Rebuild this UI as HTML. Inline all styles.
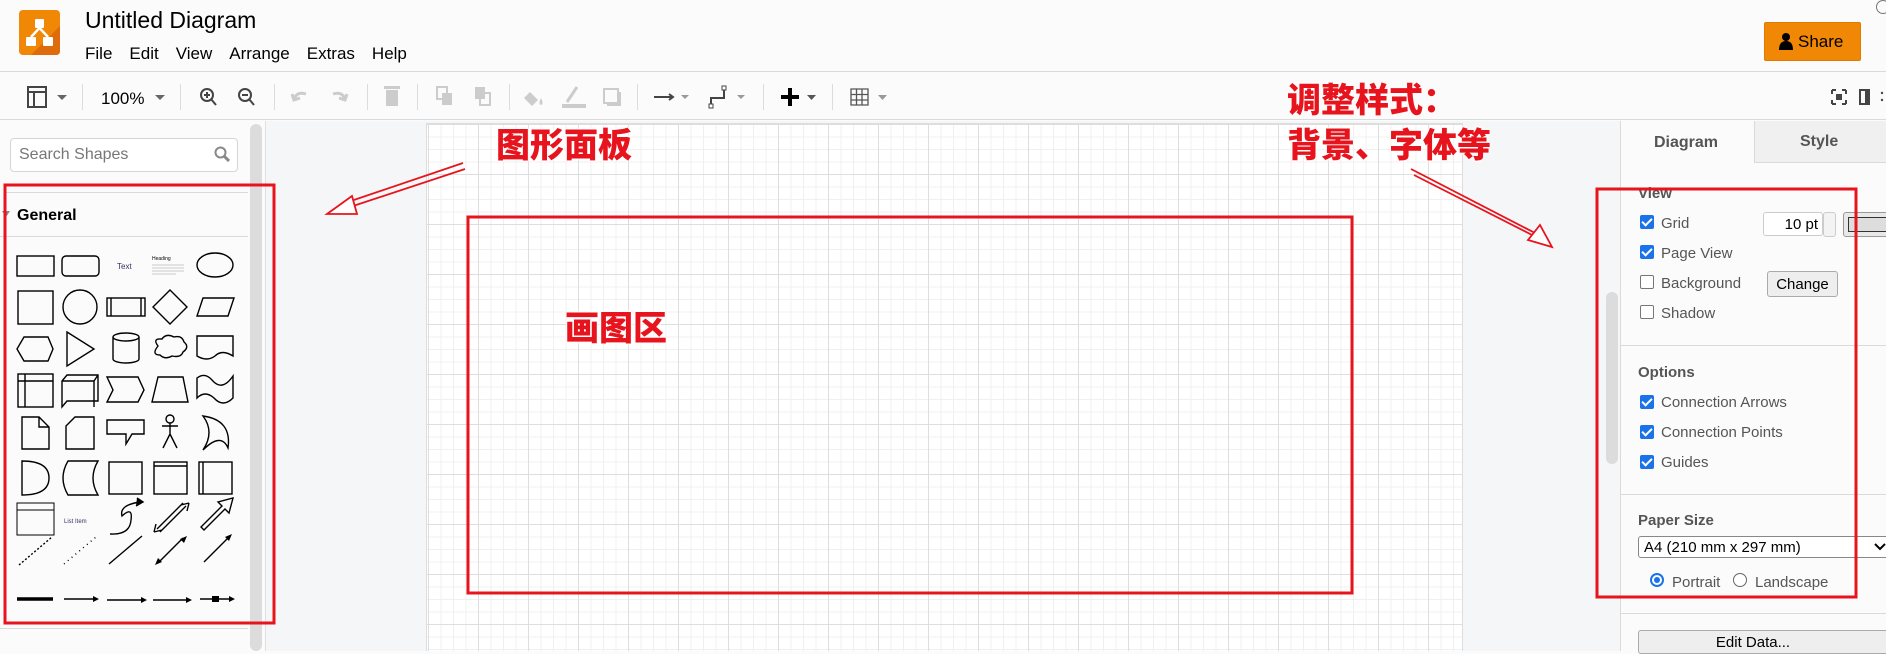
<!DOCTYPE html>
<html><head><meta charset="utf-8"><style>
*{margin:0;padding:0;box-sizing:border-box}
body{width:1886px;height:651px;overflow:hidden;position:relative;background:#fbfbfb;font-family:"Liberation Sans","Noto Sans CJK SC",sans-serif;color:#000}
.a{position:absolute}
.hdr{left:0;top:0;width:1886px;height:72px;background:#fbfbfb;border-bottom:1px solid #dadada}
.tb{left:0;top:72px;width:1886px;height:48px;background:#fbfbfb;border-bottom:1px solid #dadada}
.sep{position:absolute;top:84px;width:1px;height:26px;background:#dcdcdc}
.menu span{margin-right:17px}
.canvas{left:265px;top:121px;width:1355px;height:530px;background:#f5f6f8;border-left:1px solid #e0e0e0}
.page{left:426px;top:123px;width:1037px;height:528px;background-color:#fff;
background-image:linear-gradient(#dedede 1px,transparent 1px),linear-gradient(90deg,#dedede 1px,transparent 1px),linear-gradient(#f0f0f0 1px,transparent 1px),linear-gradient(90deg,#f0f0f0 1px,transparent 1px);
background-size:50px 50px,50px 50px,12.5px 12.5px,12.5px 12.5px;background-position:1px 0px;border-left:1px solid #ddd;border-right:1px solid #ddd;border-top:1px solid #ddd}
.rp{left:1620px;top:121px;width:266px;height:530px;background:#fbfbfb;border-left:1px solid #dadada}
.lbl{font-size:15px;color:#555}
.cb{position:absolute;left:1640px;width:14px;height:14px;border-radius:2px;background:#1a73e8}
.cb::after{content:"";position:absolute;left:4px;top:1px;width:4px;height:8px;border:solid #fff;border-width:0 2px 2px 0;transform:rotate(45deg)}
.ucb{position:absolute;left:1640px;width:14px;height:14px;border-radius:2px;border:1px solid #767676;background:#fff}
.hd{font-size:15px;font-weight:bold;color:#555}
.hl{position:absolute;height:1px;background:#dadada}
.ann{font-weight:900;color:#e8141d;font-size:34px;text-shadow:0 0 2px #fff,0 0 2px #fff,0 0 3px #fff,0 0 4px #fff;font-family:"Noto Sans CJK SC","WenQuanYi Zen Hei",sans-serif;line-height:1}
.ti{fill:none;stroke:#444;stroke-width:2}
</style></head><body>

<div class="a hdr"></div>
<svg class="a" style="left:19px;top:10px" width="41" height="45" viewBox="0 0 41 45">
<rect x="0" y="0" width="41" height="45" rx="4" fill="#f08705"/>
<path d="M12 45 L41 16 L41 41 Q41 45 37 45Z" fill="#df6c0c"/>
<rect x="16" y="9" width="9" height="9" rx="1" fill="#fff"/>
<rect x="7" y="27" width="10" height="9" rx="1" fill="#fff"/>
<rect x="24" y="27" width="10" height="9" rx="1" fill="#fff"/>
<path d="M20.5 18 L12 27 M20.5 18 L29 27" stroke="#fff" stroke-width="2.5"/>
</svg>
<div class="a" style="left:85px;top:7px;font-size:23px">Untitled Diagram</div>
<div class="a menu" style="left:85px;top:44px;font-size:17px"><span>File</span><span>Edit</span><span>View</span><span>Arrange</span><span>Extras</span><span>Help</span></div>
<div class="a" style="left:1764px;top:22px;width:97px;height:39px;background:#f08705;border-radius:2px;border:1px solid #e07a00"></div>
<svg class="a" style="left:1778px;top:32px" width="16" height="18"><circle cx="8" cy="5" r="4" fill="#000"/><path d="M1 18 Q1 9 8 9 Q15 9 15 18Z" fill="#000"/></svg>
<div class="a" style="left:1798px;top:32px;font-size:17px">Share</div>
<div class="a" style="left:1876px;top:0px;width:14px;height:14px;border:1px solid #777;border-radius:50%"></div>

<div class="a tb"></div>
<svg class="a" style="left:0;top:72px" width="1886" height="48">
<g transform="translate(0,-72)">
<rect x="28" y="87" width="18" height="20" class="ti" stroke-width="1.6"/><path d="M28 92 H46 M34 92 V107" class="ti" stroke-width="1.6"/>
<path d="M57 95 L67 95 L62 100Z" fill="#666"/>
<path d="M155 95 L165 95 L160 100Z" fill="#666"/>
<circle cx="207" cy="95" r="6" class="ti"/><path d="M211 99 L216 105 M204 95 H210 M207 92 V98" class="ti"/>
<circle cx="245" cy="95" r="6" class="ti"/><path d="M249 99 L254 105 M242 95 H248" class="ti"/>
<path d="M294 100 Q296 91 306 94 M292 94 L294 100 L300 98" fill="none" stroke="#ccc" stroke-width="3"/>
<path d="M345 100 Q343 91 333 94 M347 94 L345 100 L339 98" fill="none" stroke="#ccc" stroke-width="3"/>
<rect x="386" y="90" width="12" height="16" fill="#ccc"/><rect x="384" y="86" width="16" height="3" fill="#ccc"/>
<rect x="437" y="87" width="10" height="12" fill="none" stroke="#ccc" stroke-width="2"/><rect x="442" y="93" width="10" height="12" fill="#ccc"/>
<rect x="475" y="87" width="10" height="12" fill="#ccc"/><rect x="480" y="93" width="10" height="12" fill="none" stroke="#ccc" stroke-width="2"/>
<path d="M530 92 L538 100 L532 106 L524 98Z" fill="#ccc"/><path d="M541 98 Q544 104 541 105 Q538 104 541 98" fill="#ccc"/>
<path d="M567 102 L577 87" stroke="#ccc" stroke-width="3"/><rect x="562" y="104" width="24" height="4" fill="#ccc"/>
<rect x="604" y="89" width="14" height="14" fill="none" stroke="#ccc" stroke-width="2"/><path d="M607 105 H620 V92" stroke="#ccc" stroke-width="2" fill="none"/>
<path d="M654 97 H673 M669 94 L673 97 L669 100" class="ti" stroke-width="1.5"/><path d="M681 95 L689 95 L685 99Z" fill="#999"/>
<path d="M711 106 V98 H724 V89" class="ti" stroke-width="1.5"/><rect x="722" y="86" width="4" height="4" fill="#fff" stroke="#444"/><rect x="709" y="104" width="4" height="4" fill="#fff" stroke="#444"/><path d="M737 95 L745 95 L741 99Z" fill="#999"/>
<path d="M781 97 H799 M790 88 V106" stroke="#000" stroke-width="4"/><path d="M807 95 L816 95 L811.5 100Z" fill="#555"/>
<path d="M851 89 H868 V105 H851Z M851 94.5 H868 M851 100 H868 M856.5 89 V105 M862 89 V105" fill="none" stroke="#555" stroke-width="1.3"/><path d="M878 95 L887 95 L882.5 100Z" fill="#999"/>
<path d="M1832 90 v4 M1832 90 h4 M1846 90 v4 M1846 90 h-4 M1832 104 v-4 M1832 104 h4 M1846 104 v-4 M1846 104 h-4" stroke="#444" stroke-width="2"/><rect x="1836" y="94" width="6" height="6" fill="#444"/>
<rect x="1860" y="90" width="9" height="14" fill="none" stroke="#444" stroke-width="2"/><rect x="1865" y="90" width="4" height="14" fill="#444"/>
<circle cx="1882" cy="93" r="1.2" fill="#444"/><circle cx="1882" cy="100" r="1.2" fill="#444"/>
</g></svg>
<div class="a" style="left:101px;top:89px;font-size:17px">100%</div>
<div class="sep" style="left:82px"></div><div class="sep" style="left:180px"></div><div class="sep" style="left:274px"></div><div class="sep" style="left:367px"></div><div class="sep" style="left:417px"></div><div class="sep" style="left:509px"></div><div class="sep" style="left:637px"></div><div class="sep" style="left:763px"></div><div class="sep" style="left:832px"></div>

<div class="a" style="left:0;top:121px;width:265px;height:530px;background:#fbfbfb"></div>
<div class="a" style="left:250px;top:124px;width:12px;height:527px;background:#dcdcdc;border-radius:6px"></div>
<div class="a" style="left:10px;top:138px;width:228px;height:34px;border:1px solid #d5d5d5;border-radius:4px;background:#fff"></div>
<div class="a" style="left:19px;top:146px;font-size:16px;color:#777">Search Shapes</div>
<svg class="a" style="left:214px;top:146px" width="16" height="16"><circle cx="6.5" cy="6.5" r="5" fill="none" stroke="#888" stroke-width="2"/><path d="M10 10 L15 15" stroke="#888" stroke-width="3"/></svg>
<div class="hl" style="left:4px;top:192px;width:244px"></div>
<div class="hl" style="left:0;top:236px;width:248px"></div>
<div class="hl" style="left:0;top:628px;width:248px"></div>
<svg class="a" style="left:2px;top:210px" width="8" height="8"><path d="M0 1 L8 1 L4 7Z" fill="#888"/></svg>
<div class="a" style="left:17px;top:207px;font-size:16px;font-weight:bold">General</div>

<svg class="a" style="left:0;top:0" width="265" height="651">
<g fill="none" stroke="#000" stroke-width="1.4">
<rect x="17" y="256" width="37" height="20"/><rect x="62" y="256" width="37" height="20" rx="4"/>
<ellipse cx="215" cy="265" rx="18" ry="12"/>
<rect x="18" y="291" width="35" height="33"/><circle cx="80" cy="307" r="17"/>
<rect x="107" y="298" width="38" height="18"/><path d="M111 298V316M141 298V316"/>
<path d="M170 290 L187 307 L170 324 L153 307Z"/><path d="M203 298 H234 L228 316 H197Z"/>
<path d="M24 337 H48 L53 349 L48 361 H24 L17 349Z"/><path d="M67 332 L94 349 L67 366Z"/>
<path d="M113 337 V359 A13 4 0 0 0 139 359 V337 A13 4 0 0 0 113 337 A13 4 0 0 0 139 337"/>
<path d="M158 346 Q152 338 162 339 Q166 333 174 337 Q182 335 184 342 Q190 347 183 352 Q181 358 172 356 Q165 360 160 355 Q151 355 158 346Z"/>
<path d="M197 336 H233 V356 Q222 349 215 356 Q207 362 197 356Z"/>
<rect x="18" y="374" width="35" height="33"/><path d="M18 381 H53 M25 374 V407"/>
<path d="M62 381 L67 375 H98 V401 H67 L62 407Z M62 381 H94 V407 M94 381 L98 375"/>
<path d="M107 377 H138 L144 390 L138 402 H107 L113 390Z"/><path d="M158 377 H183 L188 402 H152Z"/>
<path d="M197 378 Q205 372 212 380 Q222 392 233 376 V398 Q223 408 214 398 Q205 390 197 398Z"/>
<path d="M22 417 H39 L49 427 V449 H22Z M39 417 V427 H49"/>
<path d="M66 426 L75 417 H94 V449 H66Z"/>
<path d="M107 420 H144 V434 H132 L126 444 V434 H107Z"/>
<circle cx="170" cy="419" r="4"/><path d="M170 423 V434 M162 426 H178 M170 434 L163 448 M170 434 L177 448"/>
<path d="M203 416 Q232 420 228 448 Q221 432 203 450 Q215 432 203 416Z"/>
<path d="M22 461 Q49 461 49 478 Q49 495 22 495Z"/>
<path d="M68 461 H98 Q88 478 98 495 H68 Q58 478 68 461Z"/>
<rect x="109" y="462" width="33" height="32"/>
<rect x="154" y="462" width="33" height="32"/><path d="M154 466 H187"/>
<rect x="199" y="462" width="33" height="32"/><path d="M203 462 V494"/>
<rect x="17" y="503" width="37" height="32" stroke-width="1"/><path d="M17 510 H54" stroke-width="1"/>
<path d="M110 534 Q130 535 131 520 Q133 506 122 516 Q119 505 140 502"/><path d="M137 498 L143 502 L136 506" fill="#000"/>
<path d="M157 529 L183 503 M160 532 L186 506 M154 532 L156 524 M154 532 L162 530 M189 503 L187 511 M189 503 L181 505"/>
<path d="M201 527 L222 506 L218 502 L233 498 L229 513 L225 509 L204 530Z"/>
<path d="M19 565 L52 537" stroke-dasharray="2 2"/><path d="M64 564 L96 537" stroke-dasharray="1 4"/>
<path d="M109 564 L142 536"/><path d="M159 562 L183 538"/><path d="M204 562 L228 538"/>
<path d="M17 599 H53" stroke-width="3.5"/><path d="M64 599 H96 M107 600 H144 M153 600 H190 M200 599 H233"/>
</g>
<g fill="#000"><path d="M155 565 L162 562 L158 558Z M187 536 L180 539 L184 543Z M232 534 L225 537 L229 541Z M99 599 L93 596 L93 602Z M147 600 L141 597 L141 603Z M192 600 L186 597 L186 603Z M235 599 L229 596 L229 602Z"/><rect x="212" y="596" width="7" height="6"/></g>
<text x="117" y="269" font-size="8" fill="#336" font-family="Liberation Sans">Text</text>
<text x="152" y="260" font-size="5" font-family="Liberation Sans">Heading</text>
<g stroke="#999" stroke-width="0.6"><path d="M152 265H184M152 268H184M152 271H184M152 274H176"/></g>
<text x="64" y="523" font-size="6" fill="#336" font-family="Liberation Sans">List Item</text>
</svg>

<div class="a canvas"></div>
<div class="a page"></div>
<div class="a" style="left:1606px;top:292px;width:12px;height:172px;background:#dcdcdc;border-radius:6px"></div>

<div class="a rp"></div>
<div class="a" style="left:1754px;top:121px;width:132px;height:42px;background:#f0f0f0;border-left:1px solid #dadada;border-bottom:1px solid #dadada"></div>
<div class="a" style="left:1654px;top:134px;font-size:16px;font-weight:bold;color:#555">Diagram</div>
<div class="a" style="left:1800px;top:133px;font-size:16px;font-weight:bold;color:#555">Style</div>
<div class="a hd" style="left:1638px;top:185px">View</div>
<div class="cb" style="top:215px"></div><div class="a lbl" style="left:1661px;top:215px">Grid</div>
<div class="cb" style="top:245px"></div><div class="a lbl" style="left:1661px;top:245px">Page View</div>
<div class="ucb" style="top:275px"></div><div class="a lbl" style="left:1661px;top:275px">Background</div>
<div class="ucb" style="top:305px"></div><div class="a lbl" style="left:1661px;top:305px">Shadow</div>
<div class="a" style="left:1763px;top:212px;width:60px;height:24px;background:#fff;border:1px solid #ccc;border-radius:3px;font-size:15px;text-align:right;padding:3px 4px 0 0">10 pt</div>
<div class="a" style="left:1823px;top:212px;width:13px;height:25px;border:1px solid #ccc;border-radius:3px;background:#f3f3f3"></div>
<div class="a" style="left:1843px;top:212px;width:50px;height:25px;border:1px solid #999;border-radius:3px;background:#e8e8e8"><div style="margin:4px;height:15px;border:1px solid #333;background:#ddd"></div></div>
<div class="a" style="left:1767px;top:271px;width:71px;height:26px;border:1px solid #aaa;border-radius:3px;background:#eee;font-size:15px;text-align:center;padding-top:4px">Change</div>
<div class="hl" style="left:1620px;top:345px;width:266px"></div>
<div class="a hd" style="left:1638px;top:364px">Options</div>
<div class="cb" style="top:395px"></div><div class="a lbl" style="left:1661px;top:394px">Connection Arrows</div>
<div class="cb" style="top:425px"></div><div class="a lbl" style="left:1661px;top:424px">Connection Points</div>
<div class="cb" style="top:455px"></div><div class="a lbl" style="left:1661px;top:454px">Guides</div>
<div class="hl" style="left:1620px;top:494px;width:266px"></div>
<div class="a hd" style="left:1638px;top:512px">Paper Size</div>
<div class="a" style="left:1638px;top:536px;width:260px;height:22px;border:1px solid #888;border-radius:3px;background:#fff;font-size:15px;padding:2px 0 0 5px">A4 (210 mm x 297 mm)</div>
<svg class="a" style="left:1874px;top:543px" width="12" height="8"><path d="M1 1 L6 6 L11 1" fill="none" stroke="#000" stroke-width="2"/></svg>
<div class="a" style="left:1650px;top:573px;width:14px;height:14px;border-radius:50%;border:2px solid #1a73e8;background:#fff"><div style="margin:2px;width:6px;height:6px;border-radius:50%;background:#1a73e8"></div></div>
<div class="a lbl" style="left:1672px;top:574px">Portrait</div>
<div class="a" style="left:1733px;top:573px;width:14px;height:14px;border-radius:50%;border:1px solid #666;background:#fff"></div>
<div class="a lbl" style="left:1755px;top:574px">Landscape</div>
<div class="hl" style="left:1620px;top:613px;width:266px"></div>
<div class="a" style="left:1638px;top:630px;width:260px;height:24px;border:1px solid #aaa;border-radius:3px;background:#eee;font-size:15px;text-align:center;padding-top:3px;padding-right:30px">Edit Data...</div>

<svg class="a" style="left:0;top:0" width="1886" height="651">
<g fill="none" stroke="#e8141d" stroke-width="3">
<rect x="5" y="185" width="269" height="438"/>
<rect x="468" y="217" width="884" height="376"/>
<rect x="1597" y="189" width="259" height="408"/>
</g>
<g fill="none" stroke="#e8141d" stroke-width="1.8">
<path d="M463 163 L345 203 M465 169 L347 208"/><path d="M352 196 L327 214 L357 214Z" fill="#fff"/>
<path d="M1411 169 L1535 233 M1414 175 L1538 238"/><path d="M1528 240 L1552 247 L1540 225Z" fill="#fff"/>
</g>
</svg>
<div class="a ann" style="left:496px;top:126px">图形面板</div>
<div class="a ann" style="left:565px;top:309px">画图区</div>
<div class="a ann" style="left:1287px;top:81px">调整样式：</div>
<div class="a ann" style="left:1287px;top:126px">背景、字体等</div>
</body></html>
